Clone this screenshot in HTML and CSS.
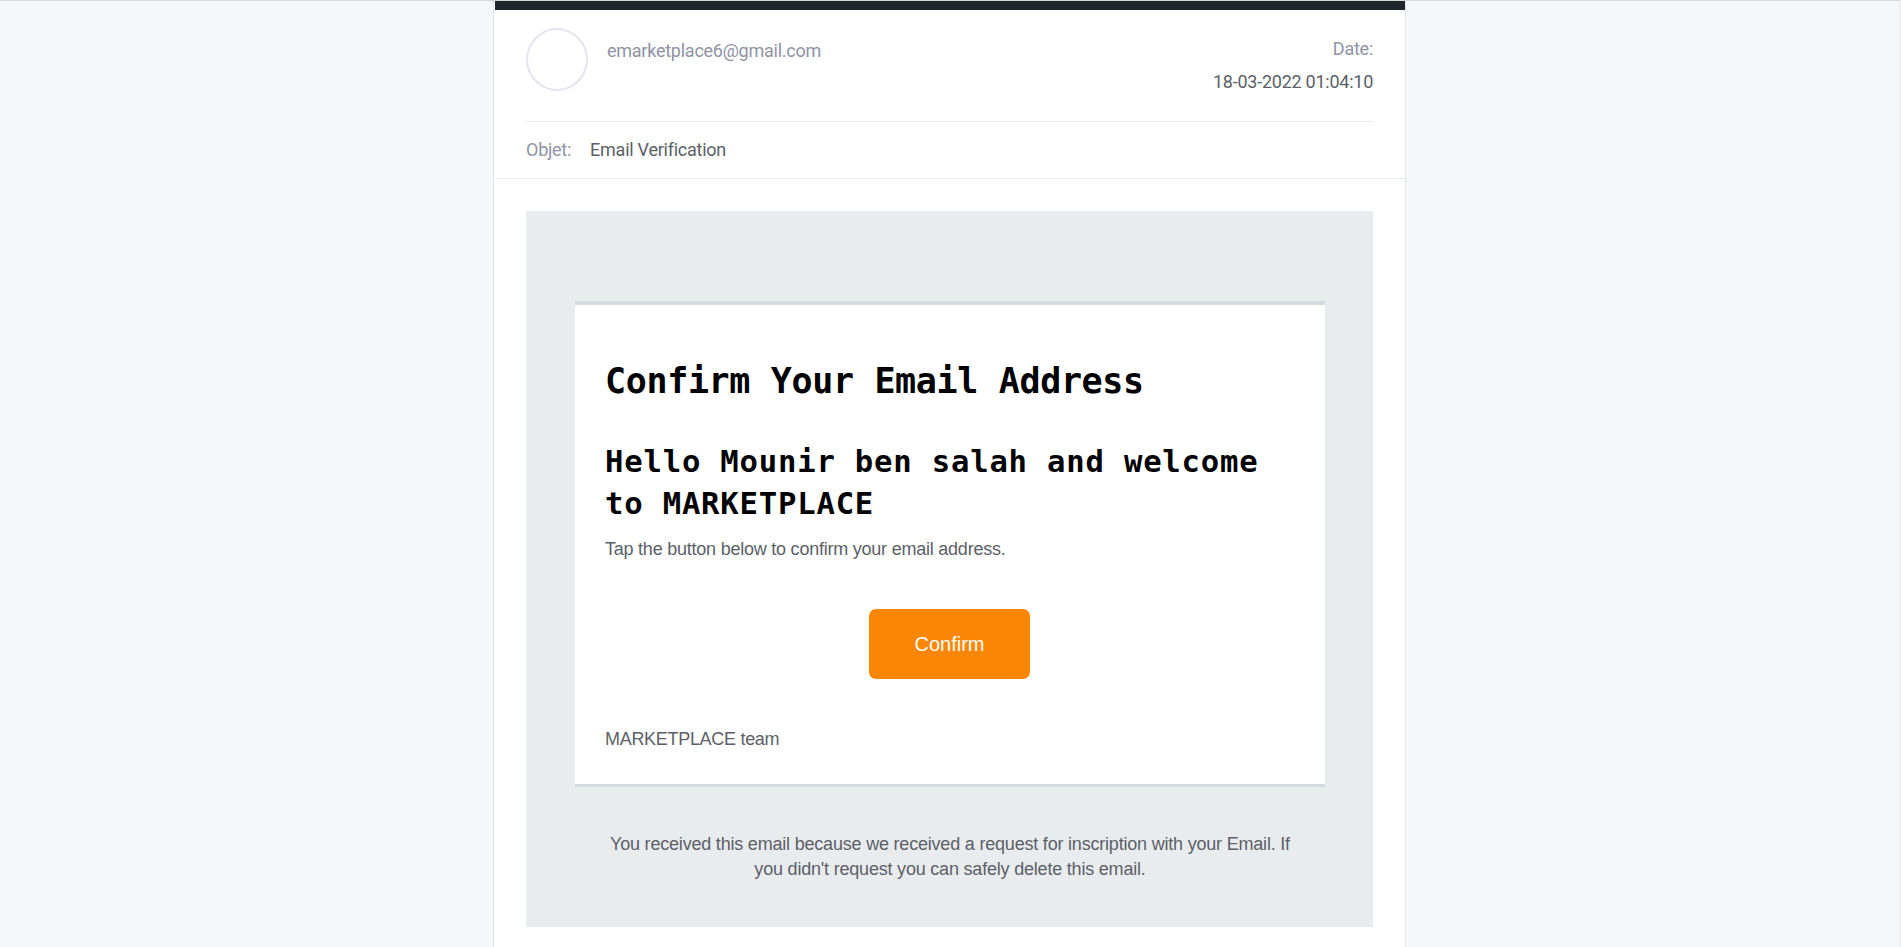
FILE: index.html
```
<!DOCTYPE html>
<html lang="fr">
<head>
<meta charset="utf-8">
<title>Email Verification</title>
<link rel="stylesheet" href="styles.css">
</head>
<body>
<main class="mail">
  <div class="topbar"></div>
  <header class="head">
    <div class="sender">
      <div class="avatar"></div>
      <div class="from"><span>emarketplace6@gmail.com</span></div>
      <div class="date"><span class="label">Date:</span><span class="value">18-03-2022 01:04:10</span></div>
    </div>
    <div class="subject"><span class="label">Objet:</span><span class="value">Email Verification</span></div>
  </header>
  <section class="body">
    <article class="card">
      <h1><span>Confirm Your Email Address</span></h1>
      <h2><span>Hello Mounir ben salah and welcome</span><br>to MARKETPLACE</h2>
      <p class="intro"><span>Tap the button below to confirm your email address.</span></p>
      <a class="button">Confirm</a>
      <p class="team"><span>MARKETPLACE team</span></p>
    </article>
    <p class="notice"><span>You received this email because we received a request for inscription with your Email. If</span><br>you didn't request you can safely delete this email.</p>
  </section>
</main>
</body>
</html>
```
FILE: styles.css
```
* { box-sizing: border-box; }
body {
  margin: 0;
  height: 947px;
  overflow: hidden;
  background: #f6f7f9;
  border-top: 1px solid #d6d8da;
  border-right: 2px solid #f0f0f0;
  font-family: "Liberation Sans", Arial, sans-serif;
  font-size: 18px;
  color: #5c5f68;
}
h1, h2, p { margin: 0; }
.mail {
  width: 913px;
  height: 946px;
  margin-left: 493px;
  background: #fff;
  border: solid #e3e3ed;
  border-width: 0 1px;
}
.topbar { height: 9px; margin-left: 1px; background: #20242b; }
.head {
  height: 169px;
  margin-left: 1px;
  padding: 18px 32px 0 31px;
  border-bottom: 1px solid #e8e8f1;
  font-family: Roboto, sans-serif;
  letter-spacing: -0.25px;
}
.sender {
  display: flex;
  height: 94px;
  border-bottom: 1px solid #e8e8f1;
}
.avatar {
  width: 62px;
  height: 63px;
  border: 2px solid #e5e3f0;
  border-radius: 50%;
}
.from { margin-left: 19px; padding-top: 12px; line-height: 22px; color: #8f93a5; }
.date {
  display: flex;
  flex-direction: column;
  align-items: flex-end;
  margin-left: auto;
  padding-top: 4px;
  line-height: 33px;
}
.label { color: #8f93a5; }
.subject { display: flex; gap: 19px; line-height: 56px; }
.body {
  height: 716px;
  margin: 32px 32px 0;
  padding: 90px 48px 0 49px;
  background: #e8ecef;
}
.card {
  height: 486px;
  padding: 52px 30px 0;
  background: #fff;
  border-top: 4px solid #d4dae0;
  border-bottom: 3px solid #d4dae0;
  display: flex;
  flex-direction: column;
  align-items: flex-start;
}
h1, h2 { font-family: "DejaVu Sans Mono", monospace; font-weight: 700; color: #000; white-space: nowrap; }
h1 { font-size: 35px; line-height: 48px; letter-spacing: -0.35px; }
h2 { margin-top: 36px; font-size: 30.6px; line-height: 42px; letter-spacing: 0.8px; }
.intro { margin-top: 12px; line-height: 25px; letter-spacing: -0.23px; white-space: nowrap; }
.button {
  align-self: center;
  width: 161px;
  height: 70px;
  margin: 47px 1px 0 0;
  border-radius: 7px;
  background: #fd8604;
  color: #fff;
  font-size: 20px;
  line-height: 70px;
  text-align: center;
}
.team { margin-top: 48px; line-height: 25px; letter-spacing: -0.3px; }
.notice { margin-top: 45px; line-height: 25px; letter-spacing: -0.2px; text-align: center; white-space: nowrap; }
```
